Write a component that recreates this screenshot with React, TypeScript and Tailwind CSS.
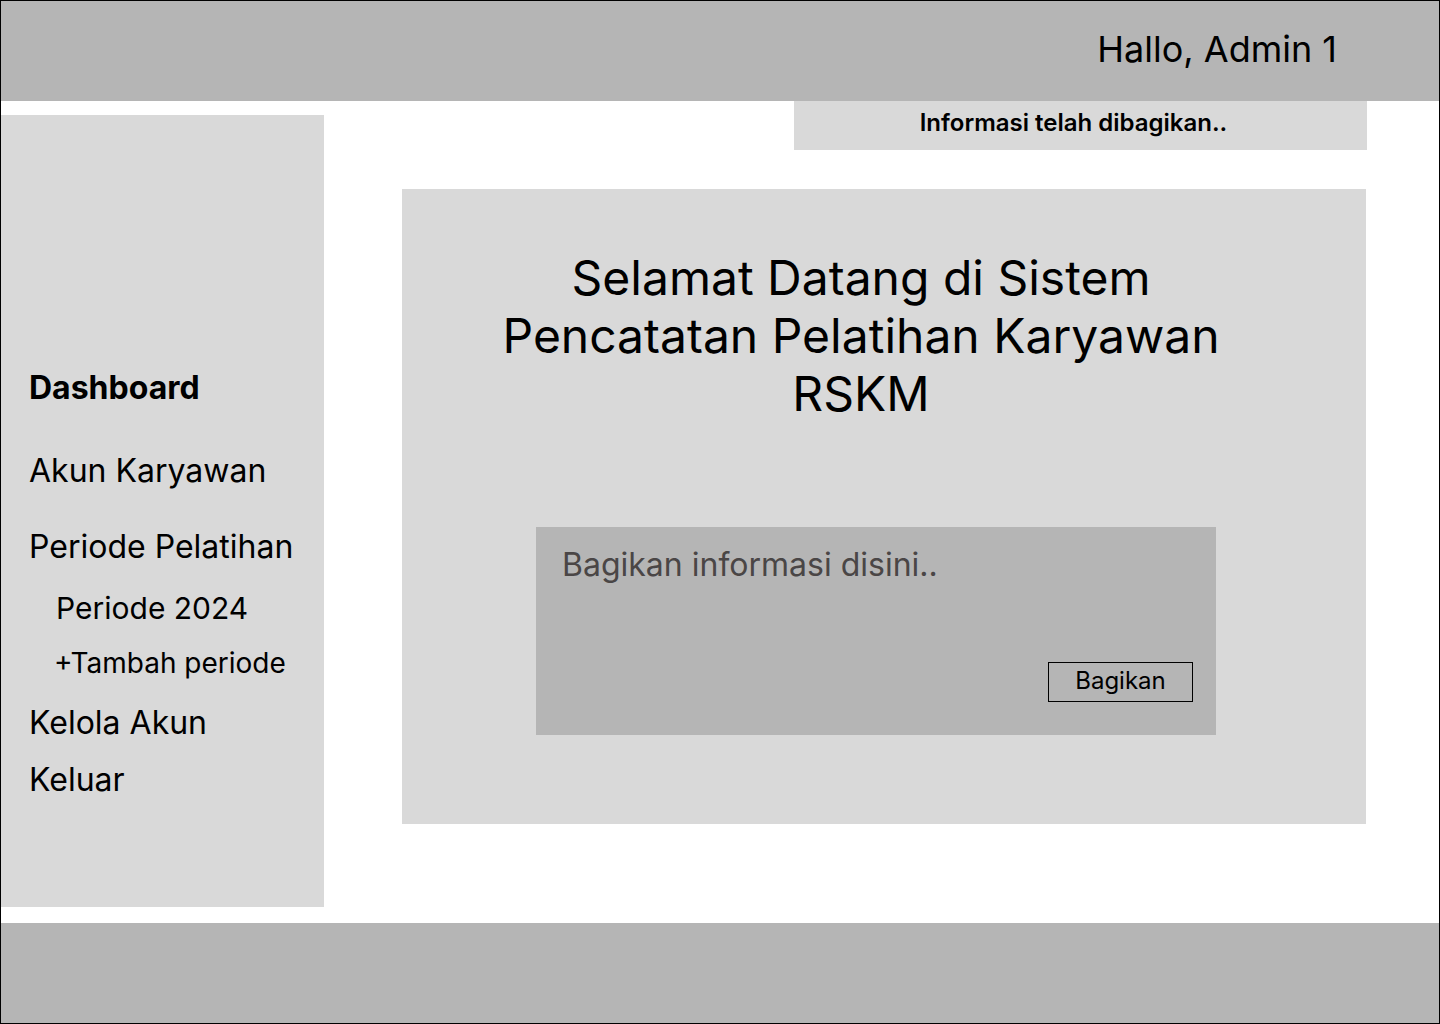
import React from "react";

export default function App() {
  return (
    <div
      className="w-[1440px] h-[1024px] border border-black bg-white flex flex-col text-black overflow-hidden"
      style={{ fontFamily: "Inter, 'Noto Sans', sans-serif" }}
    >
      {/* Header */}
      <header className="h-[100px] shrink-0 bg-[#b5b5b5] flex items-start justify-end pr-[102px] pt-[27px]">
        <span className="text-[36px] leading-[42px]">Hallo, Admin 1</span>
      </header>

      {/* Body */}
      <div className="flex-1 flex">
        {/* Sidebar */}
        <aside className="w-[323px] mt-[14px] h-[792px] bg-[#d9d9d9] flex flex-col pl-[28px] pt-[255px]">
          <div className="text-[32px] leading-[36px] font-bold">Dashboard</div>
          <div className="text-[32px] leading-[36px] mt-[47px]">Akun Karyawan</div>
          <div className="text-[32px] leading-[36px] mt-[40px]">Periode Pelatihan</div>
          <div className="text-[30px] leading-[36px] mt-[25px] pl-[27px]">Periode 2024</div>
          <div className="text-[28px] leading-[36px] mt-[19px] pl-[25px]">+Tambah periode</div>
          <div className="text-[32px] leading-[36px] mt-[24px]">Kelola Akun</div>
          <div className="text-[32px] leading-[36px] mt-[21px]">Keluar</div>
        </aside>

        {/* Main */}
        <main className="flex-1 flex flex-col">
          <div className="ml-[470px] w-[573px] h-[49px] bg-[#d9d9d9] flex justify-center pr-[14px] pt-[7px]">
            <span className="text-[24px] leading-[30px] font-semibold">Informasi telah dibagikan..</span>
          </div>

          <section className="ml-[78px] mt-[39px] w-[964px] h-[635px] bg-[#d9d9d9] flex flex-col">
            <h1 className="pt-[60px] pr-[46px] text-center text-[48px] leading-[58px] font-normal">
              Selamat Datang di Sistem
              <br />
              Pencatatan Pelatihan Karyawan
              <br />
              RSKM
            </h1>

            <div className="ml-[134px] mt-[104px] w-[680px] h-[208px] bg-[#b5b5b5] flex flex-col">
              <div className="pl-[26px] pt-[19px] text-[32px] leading-[38px] text-[#4a4646]">
                Bagikan informasi disini..
              </div>
              <div className="flex-1 flex items-end justify-end pr-[23px] pb-[33px]">
                <button className="w-[145px] h-[40px] border border-black text-[24px] leading-[28px] flex items-center justify-center pb-[2px]">
                  Bagikan
                </button>
              </div>
            </div>
          </section>
        </main>
      </div>

      {/* Footer */}
      <footer className="h-[100px] shrink-0 bg-[#b5b5b5]" />
    </div>
  );
}
